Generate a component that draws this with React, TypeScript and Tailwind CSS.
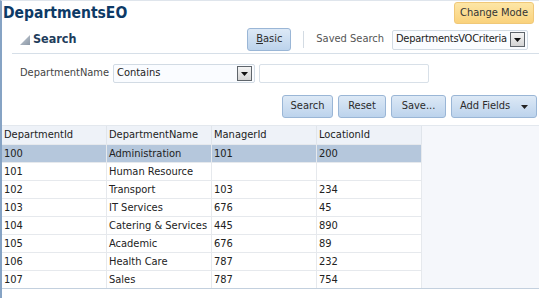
const rows = [
  ["100", "Administration", "101", "200"],
  ["101", "Human Resource", "", ""],
  ["102", "Transport", "103", "234"],
  ["103", "IT Services", "676", "45"],
  ["104", "Catering & Services", "445", "890"],
  ["105", "Academic", "676", "89"],
  ["106", "Health Care", "787", "232"],
  ["107", "Sales", "787", "754"],
];

const cols = ["DepartmentId", "DepartmentName", "ManagerId", "LocationId"];

const ArrowBox = () => (
  <span className="flex h-[15px] w-[15px] items-center justify-center border border-[#5f656b] bg-gradient-to-b from-[#f4f4f4] to-[#d4d4d4]">
    <svg width="7" height="4" viewBox="0 0 7 4">
      <polygon points="0,0 7,0 3.5,4" fill="#111" />
    </svg>
  </span>
);

const Btn = ({ children, className = "" }: { children: React.ReactNode; className?: string }) => (
  <button
    className={
      "flex h-[23px] items-center rounded-[3px] border border-[#9ab6d6] bg-gradient-to-b from-[#dde9f6] to-[#bcd3ec] text-[11px] text-[#2b2b2b] " +
      className
    }
  >
    {children}
  </button>
);

export default function App() {
  return (
    <div
      className="h-[298px] w-[539px] overflow-hidden border-l-2 border-t border-l-[#86a3c4] border-t-[#dfe5ec] bg-white text-[#333]"
      style={{ fontFamily: '"DejaVu Sans Condensed", Tahoma, "Liberation Sans", sans-serif' }}
    >
      {/* Title */}
      <div className="flex h-[24px] items-start justify-between pr-[5px]">
        <span className="pl-[1px] pt-[3px] text-[15.5px] font-bold leading-[18px] text-[#0d3a66]">DepartmentsEO</span>
        <button className="mt-[1px] h-[22px] w-[80px] rounded-[3px] border border-[#f0c878] bg-gradient-to-b from-[#fde6a6] to-[#fad27c] text-[11px] text-[#333]">
          Change Mode
        </button>
      </div>

      {/* Search header */}
      <div className="ml-[10px] flex h-[29px] items-center border-b border-[#d6dfe8] pb-[1px] pt-[2px]">
        <svg width="10" height="10" viewBox="0 0 10 10" className="ml-[8px] mr-[3px]">
          <defs>
            <linearGradient id="tri" x1="0" y1="0" x2="1" y2="1">
              <stop offset="0" stopColor="#c8d0d8" />
              <stop offset="1" stopColor="#8c98a6" />
            </linearGradient>
          </defs>
          <polygon points="10,0 10,10 0,10" fill="url(#tri)" />
        </svg>
        <span className="text-[12.5px] font-bold text-[#1e3d5c]">Search</span>
        <div className="flex-1" />
        <Btn className="h-[21px] w-[44px] justify-center border-[#8fb1d8] from-[#d6e6f7] to-[#b4cdea]">
          <span>
            <span className="underline">B</span>asic
          </span>
        </Btn>
        <div className="mx-[12px] h-[17px] w-px bg-[#d3dbe3]" />
        <span className="mr-[8px] text-[11px] text-[#555]">Saved Search</span>
        <div className="mr-[11px] flex h-[20px] w-[136px] items-center justify-between rounded-[2px] border border-[#d2dbe4] bg-[#fafcff] pl-[3px] pr-[2px]">
          <span className="text-[11px] tracking-[-0.25px] text-[#222]">DepartmentsVOCriteria</span>
          <ArrowBox />
        </div>
      </div>

      {/* Criteria */}
      <div className="mt-[10px] flex h-[19px] items-center">
        <span className="ml-[18px] w-[93px] text-[11px] text-[#444]">DepartmentName</span>
        <div className="flex h-[19px] w-[142px] items-center justify-between rounded-[2px] border border-[#d2dbe4] bg-[#fafcff] pl-[3px] pr-[2px]">
          <span className="text-[11px] text-[#222]">Contains</span>
          <ArrowBox />
        </div>
        <div className="ml-[4px] h-[19px] w-[170px] rounded-[2px] border border-[#d8e0e8] bg-white" />
      </div>

      {/* Buttons */}
      <div className="mt-[12px] flex justify-end gap-[5px] pr-[2px]">
        <Btn className="w-[51px] justify-center">Search</Btn>
        <Btn className="w-[48px] justify-center">Reset</Btn>
        <Btn className="w-[55px] justify-center">Save...</Btn>
        <Btn className="w-[86px] justify-between pl-[8px] pr-[8px]">
          <span>Add Fields</span>
          <svg width="7" height="4" viewBox="0 0 7 4">
            <polygon points="0,0 7,0 3.5,4" fill="#222" />
          </svg>
        </Btn>
      </div>

      {/* Table */}
      <div className="mt-[7px] flex border-b border-t border-b-[#c3d0de] border-t-[#e3e8ee] bg-[#f5f7fb] text-[11px] text-[#222]">
        <div className="w-[420px]">
          <div className="grid h-[18px] grid-cols-[105px_105px_105px_105px] bg-[#eef2f8]">
            {cols.map((c) => (
              <div key={c} className="border-r border-[#e0e5eb] pl-[2px] leading-[18px]">
                {c}
              </div>
            ))}
          </div>
          {rows.map((r, i) => (
            <div
              key={r[0]}
              className={
                "grid h-[18px] grid-cols-[105px_105px_105px_105px] border-t border-[#e6e9ed] " +
                (i === 0 ? "bg-[#b5c7dc]" : "bg-white")
              }
            >
              {r.map((v, j) => (
                <div key={j} className="border-r border-[#e6e9ed] pl-[2px] leading-[17px]">
                  {v}
                </div>
              ))}
            </div>
          ))}
        </div>
      </div>
    </div>
  );
}
